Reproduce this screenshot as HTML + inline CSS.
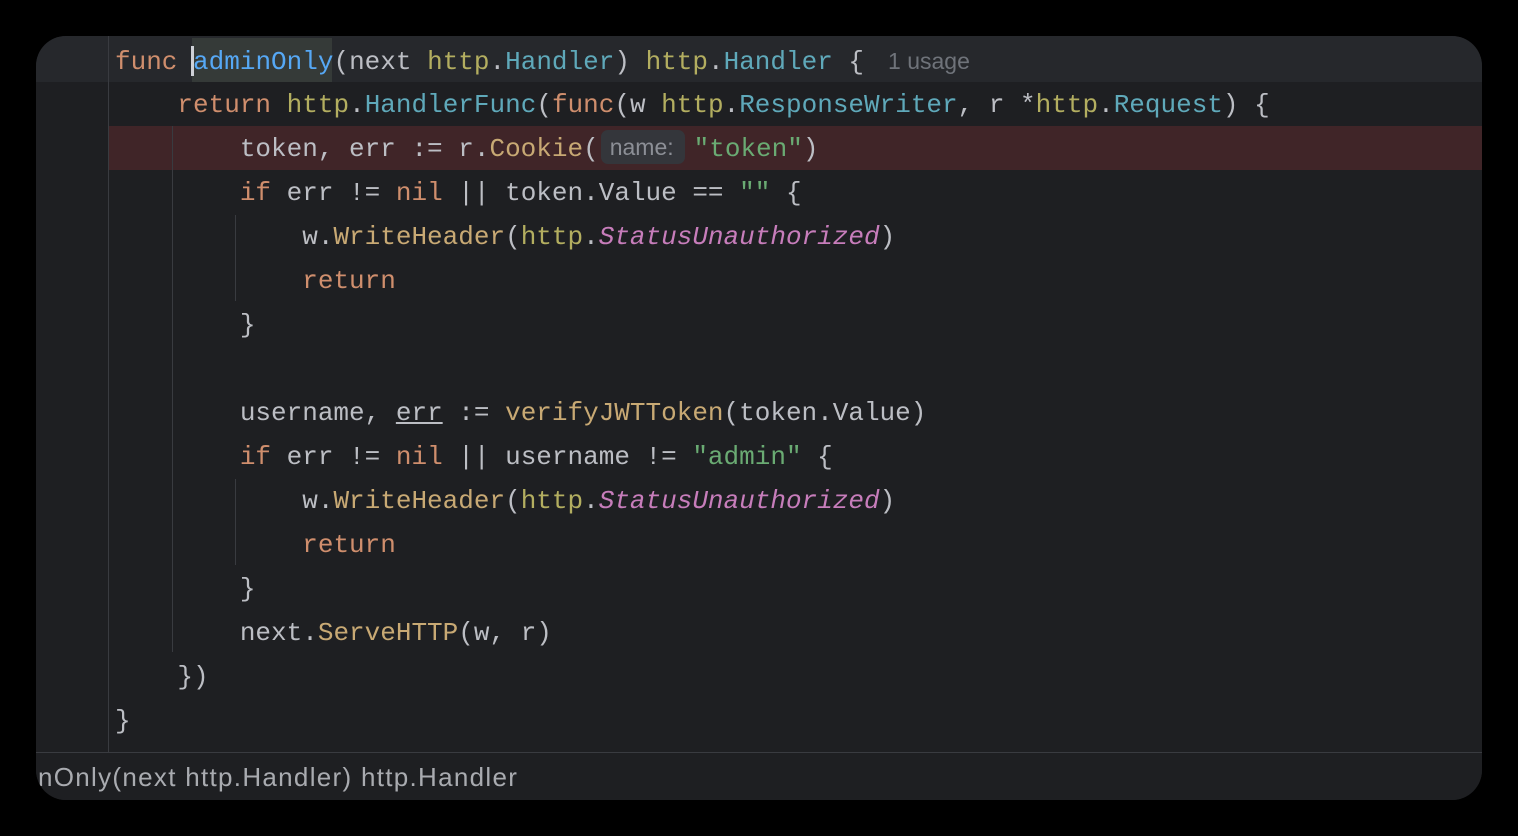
<!DOCTYPE html>
<html><head><meta charset="utf-8"><style>
html,body{margin:0;padding:0;background:#000;width:1518px;height:836px;overflow:hidden}
.win{position:absolute;left:36px;top:36px;width:1446px;height:764px;background:#1e1f22;border-radius:30px;overflow:hidden}
.cur{position:absolute;left:0;top:0;width:1446px;height:46px;background:#26282c}
.red{position:absolute;left:73px;top:90px;width:1373px;height:44px;background:#402528}
.gut{position:absolute;left:72px;top:0;width:1px;height:716px;background:#393b40}
.g{position:absolute;width:1px;background:#393b40}
.l{position:absolute;left:79px;height:44px;line-height:44px;font-family:"Liberation Mono",monospace;font-size:26px;color:#bcbec4;white-space:pre;letter-spacing:0}
.k{color:#cf8e6d}.f{color:#56a8f5}.p{color:#b3ae60}.t{color:#5fa9ba}.m{color:#c8a974}.c{color:#c77dbb;font-style:italic}.s{color:#6aab73}
.hint{display:inline-block;background:#34363b;color:#8c8f96;font-family:"Liberation Sans",sans-serif;font-size:23px;line-height:34px;height:34px;padding:0 11px 0 9px;border-radius:7px;vertical-align:1px;margin:0 9px 0 2px}
.use{font-family:"Liberation Sans",sans-serif;font-size:23px;color:#6f737a;margin-left:24px}
.sb{position:absolute;left:0;top:716px;width:1446px;height:48px;background:#1e1f22;border-top:1px solid #393b40}
.sbt{position:absolute;left:2px;top:9px;font-family:"Liberation Sans",sans-serif;font-size:26px;letter-spacing:1.3px;color:#a9abb0;white-space:pre}
</style></head><body>
<div class="win">
<div class="cur"></div>
<div class="red"></div>
<div class="gut"></div>
<div class="g" style="left:136px;top:90px;height:526px"></div>
<div class="g" style="left:199px;top:179px;height:86px"></div>
<div class="g" style="left:199px;top:443px;height:86px"></div>
<div style="position:absolute;left:156px;top:2px;width:140px;height:44px;background:#353a38"></div>
<div style="position:absolute;left:155px;top:10px;width:3px;height:30px;background:#ced0d6"></div>
<div class="l" style="top:3px"><span class="k">func</span> <span class="f">adminOnly</span>(next <span class="p">http</span>.<span class="t">Handler</span>) <span class="p">http</span>.<span class="t">Handler</span> {<span class="use">1 usage</span></div>
<div class="l" style="top:47px">    <span class="k">return</span> <span class="p">http</span>.<span class="t">HandlerFunc</span>(<span class="k">func</span>(w <span class="p">http</span>.<span class="t">ResponseWriter</span>, r *<span class="p">http</span>.<span class="t">Request</span>) {</div>
<div class="l" style="top:91px">        token, err := r.<span class="m">Cookie</span>(<span class="hint">name:</span><span class="s">"token"</span>)</div>
<div class="l" style="top:135px">        <span class="k">if</span> err != <span class="k">nil</span> || token.Value == <span class="s">""</span> {</div>
<div class="l" style="top:179px">            w.<span class="m">WriteHeader</span>(<span class="p">http</span>.<span class="c">StatusUnauthorized</span>)</div>
<div class="l" style="top:223px">            <span class="k">return</span></div>
<div class="l" style="top:267px">        }</div>
<div class="l" style="top:355px">        username, <span style="text-decoration:underline">err</span> := <span class="m">verifyJWTToken</span>(token.Value)</div>
<div class="l" style="top:399px">        <span class="k">if</span> err != <span class="k">nil</span> || username != <span class="s">"admin"</span> {</div>
<div class="l" style="top:443px">            w.<span class="m">WriteHeader</span>(<span class="p">http</span>.<span class="c">StatusUnauthorized</span>)</div>
<div class="l" style="top:487px">            <span class="k">return</span></div>
<div class="l" style="top:531px">        }</div>
<div class="l" style="top:575px">        next.<span class="m">ServeHTTP</span>(w, r)</div>
<div class="l" style="top:619px">    })</div>
<div class="l" style="top:663px">}</div>
<div class="sb"><div class="sbt">nOnly(next http.Handler) http.Handler</div></div>
</div>
</body></html>
